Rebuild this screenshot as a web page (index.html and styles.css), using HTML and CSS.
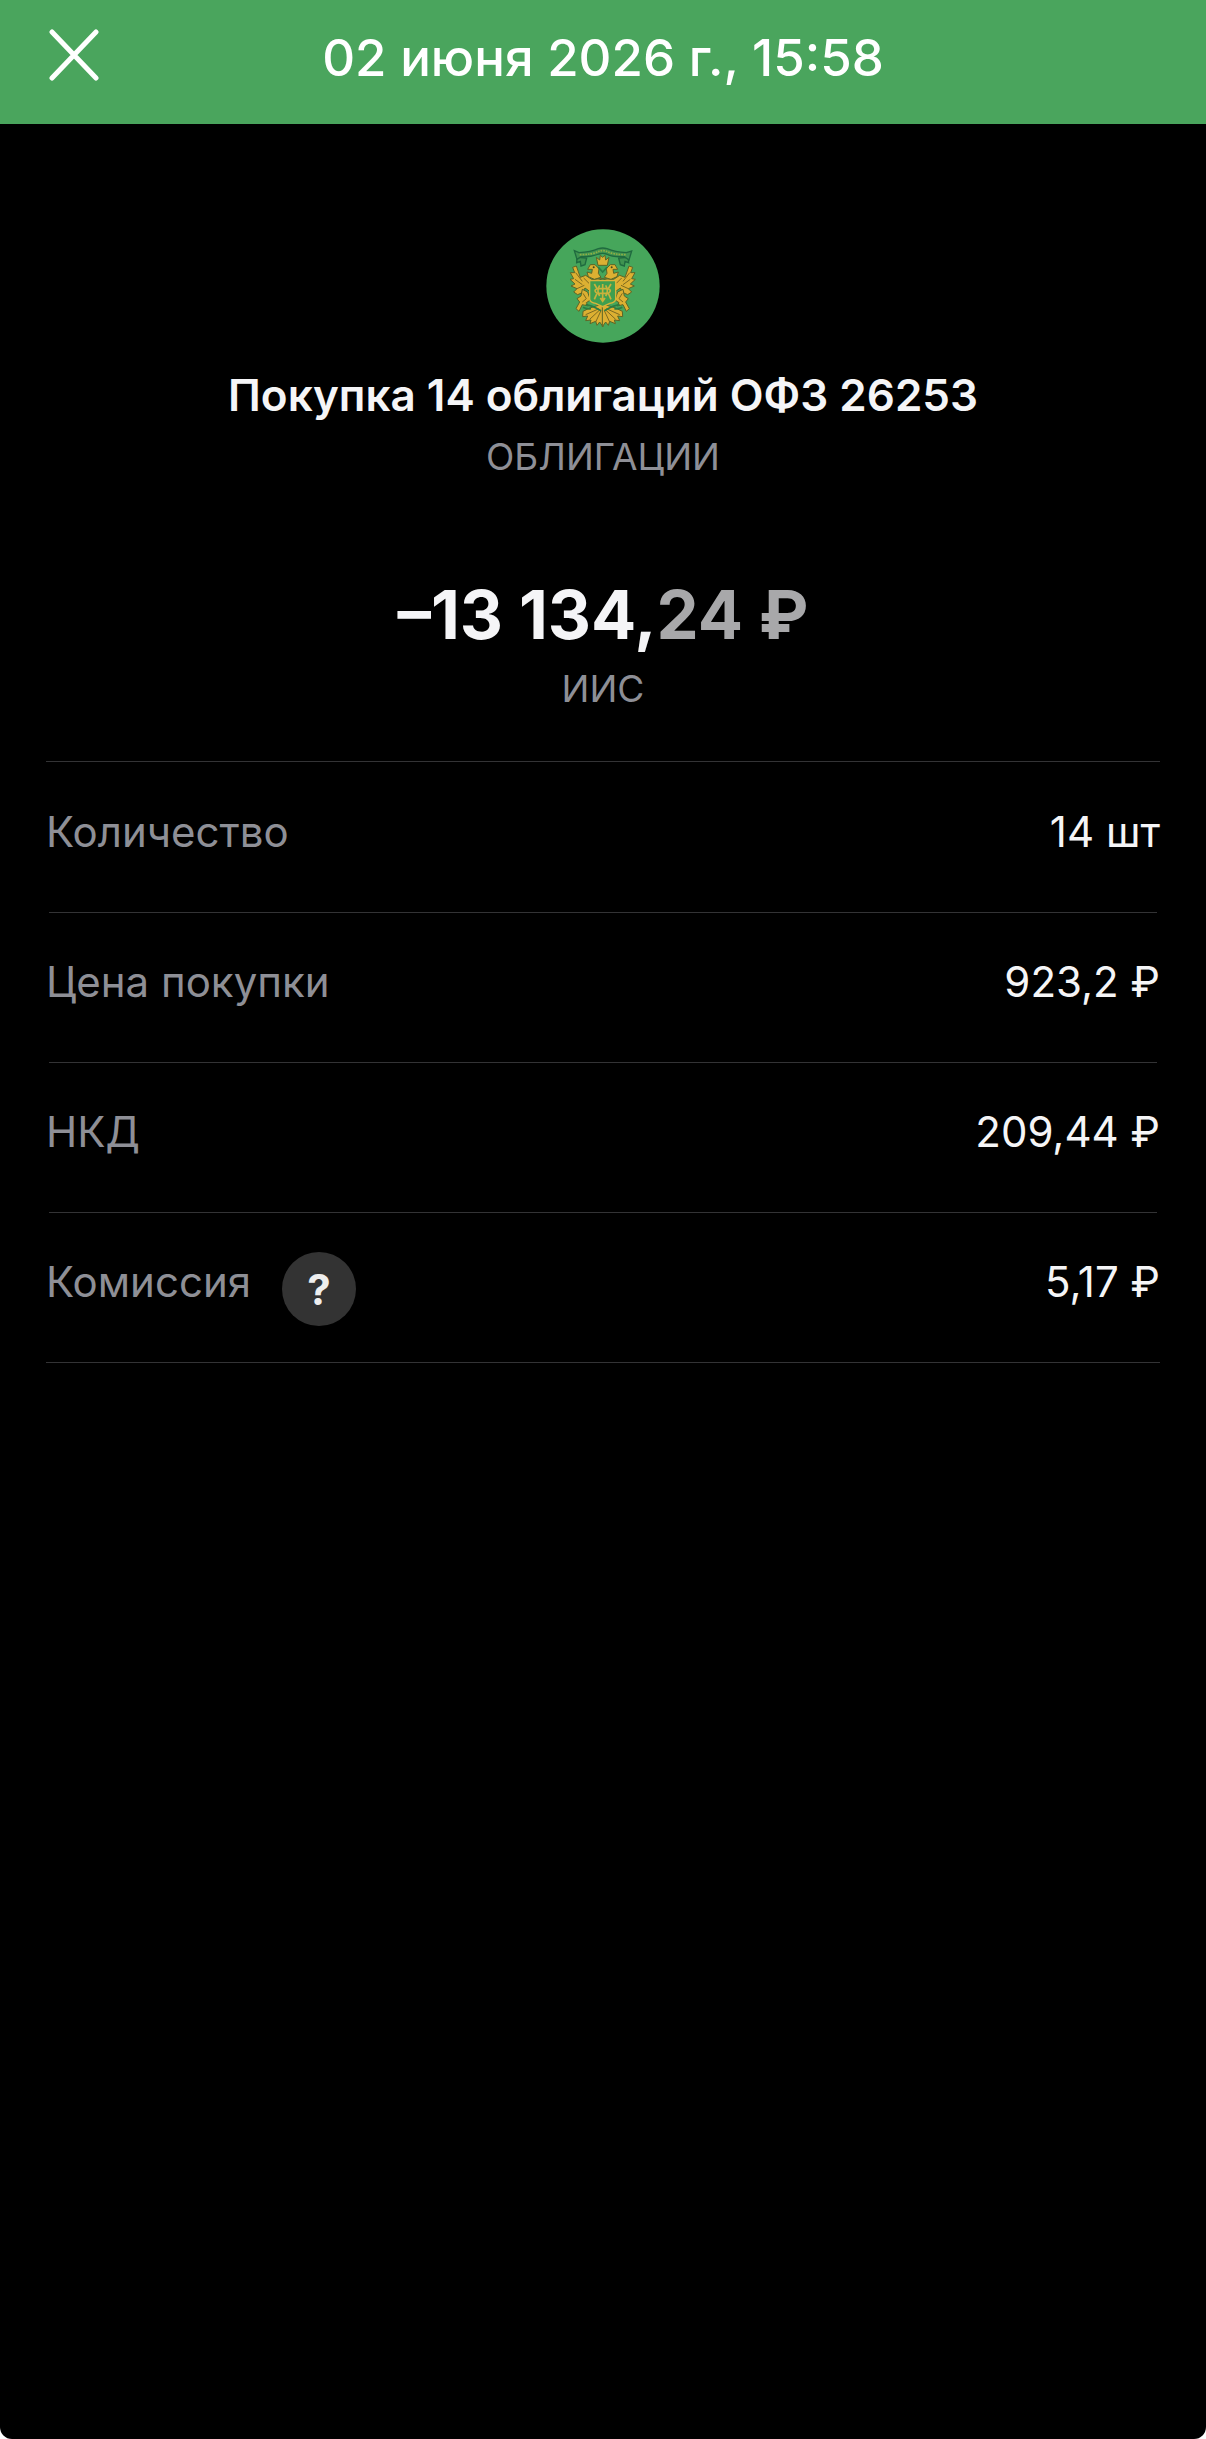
FILE: index.html
```html
<!DOCTYPE html>
<html lang="ru">
<head>
    <meta charset="UTF-8">
    <meta name="viewport" content="width=device-width, initial-scale=1.0">
    <title>Покупка 14 облигаций ОФЗ 26253</title>
    <link rel="stylesheet" href="styles.css">
</head>
<body>
    <div class="screen">
        <header class="topbar">
            <button type="button" class="close" aria-label="Закрыть">
                <svg viewBox="0 0 50 52" aria-hidden="true">
                    <path d="M3 3 L47 49 M47 3 L3 49"/>
                </svg>
            </button>
            <h1>02 июня 2026 г., 15:58</h1>
        </header>

        <main>
            <section class="summary">
                <svg class="emblem" viewBox="42 27 340 342" aria-hidden="true">
                    <defs>
                        <g id="half">
                            <!-- wing -->
                            <path class="gold" d="M211 176 L178 178 L160 166 L144 172 L132 138 L121 142 L127 158 L114 158 L124 176 L113 178 L128 192 L116 198 L134 206 L124 216 L136 224 L150 218 L158 204 L172 214 L176 190 Z"/>
                            <path class="line" d="M130 158 L150 184 M128 178 L150 194 M134 206 L156 196 M154 174 L170 190"/>
                            <!-- head -->
                            <path class="gold" d="M206 172 L198 160 L200 146 L188 134 L174 134 L166 148 L180 148 L178 160 L164 156 L168 170 L186 178 Z"/>
                            <circle class="dark" cx="184" cy="142" r="3"/>
                            <!-- leg -->
                            <path class="gold" d="M150 208 L166 216 L174 240 L162 248 L168 258 L150 254 L140 274 L131 266 L142 246 L134 236 L146 228 Z"/>
                            <path class="line" d="M152 220 L162 236 L150 246"/>
                            <!-- tail -->
                            <path class="gold" d="M212 256 L198 256 L172 264 L152 274 L151 290 L166 288 L160 302 L176 300 L173 311 L190 304 L194 316 L202 306 L212 320 Z"/>
                            <path class="line" d="M200 266 L160 284 M202 270 L172 298 M206 272 L190 306"/>
                            <!-- laurel -->
                            <path class="leaf" d="M160 254 Q178 256 206 272 M152 262 Q162 268 176 266"/>
                            <!-- ribbon tail -->
                            <path class="ribbon" d="M134 112 L133 128 L144 124 L146 138 L158 134 L163 114 Z"/>
                        </g>
                    </defs>
                    <circle class="disc" cx="212" cy="198" r="170"/>
                    <use href="#half"/>
                    <use href="#half" transform="translate(422 0) scale(-1 1)"/>
                    <path class="ribbon" d="M126 92 L140 98 Q176 96 198 86 Q211 82 224 86 Q248 96 282 98 L298 93 L290 120 L276 110 Q240 112 222 102 Q211 98 200 102 Q176 112 146 110 L134 118 Z"/>
                    <path class="motto" d="M142 104 Q180 104 200 94 Q211 90 222 94 Q244 104 280 104"/>
                    <!-- crown -->
                    <path class="gold" d="M192 112 L202 120 L204 106 L211 112 L218 106 L220 120 L230 112 L225 136 L197 136 Z"/>
                    <path class="leaf" d="M198 142 L211 156 L224 142"/>
                    <!-- shield -->
                    <path class="shield" d="M172 182 L250 182 L250 238 Q248 248 232 250 L211 260 L190 250 Q174 248 172 238 Z"/>
                    <path class="mark" d="M186 192 L194 206 Q182 212 194 220 L186 238 M236 192 L228 206 Q240 212 228 220 L236 238 M211 192 V246 M194 206 H228 M194 220 H228 M202 196 Q192 212 202 228 M220 196 Q230 212 220 228 M204 234 L211 244 L218 234"/>
                </svg>
                <h2>Покупка 14 облигаций ОФЗ 26253</h2>
                <p class="kind">ОБЛИГАЦИИ</p>
                <p class="amount">–13 134,<span class="cents">24 ₽</span></p>
                <p class="account">ИИС</p>
            </section>

            <dl class="details">
                <div class="row">
                    <dt>Количество</dt>
                    <dd>14 шт</dd>
                </div>
                <div class="row">
                    <dt>Цена покупки</dt>
                    <dd>923,2 ₽</dd>
                </div>
                <div class="row">
                    <dt>НКД</dt>
                    <dd>209,44 ₽</dd>
                </div>
                <div class="row">
                    <dt>Комиссия <button type="button" class="help" aria-label="Подробнее о комиссии">?</button></dt>
                    <dd>5,17 ₽</dd>
                </div>
            </dl>
        </main>
    </div>
</body>
</html>
```
FILE: styles.css
```css
* {
    box-sizing: border-box;
}

body {
    margin: 0;
    background: #fff;
    font-family: Inter, "Noto Sans", sans-serif;
    color: #f5f5f7;
}

h1, h2, p, dl, dd {
    margin: 0;
}

button {
    border: none;
    padding: 0;
    font-family: inherit;
    cursor: pointer;
}

.screen {
    min-height: 100vh;
    background: #000;
    border-radius: 0 0 12px 12px;
    overflow: hidden;
}

.topbar {
    display: grid;
    grid-template-columns: 52px 1fr 52px;
    align-items: end;
    padding: 24px 48px 34px;
    background: #4aa55d;
    color: #fff;
}

.topbar h1 {
    font-size: 51px;
    line-height: 64px;
    font-weight: 500;
    text-align: center;
}

.close {
    height: 66px;
    padding-bottom: 4px;
    background: none;
}

.close svg {
    display: block;
    width: 50px;
    height: 52px;
    margin: 0 auto;
    fill: none;
    stroke: #fff;
    stroke-width: 5;
    stroke-linecap: round;
}

.summary {
    display: flex;
    flex-direction: column;
    align-items: center;
    padding: 105px 46px 48px;
    text-align: center;
}

.emblem {
    width: 114px;
    height: 114px;
    margin-bottom: 24px;
}

.summary h2 {
    font-size: 44px;
    line-height: 56px;
    font-weight: 600;
}

.kind,
.account {
    font-size: 37px;
    line-height: 48px;
    color: #8e8f96;
}

.kind {
    margin-top: 10px;
}

.amount {
    margin-top: 94px;
    font-size: 67px;
    line-height: 80px;
    font-weight: 700;
}

.account {
    margin-top: 10px;
}

.cents {
    color: #a8a8aa;
}

.details {
    margin: 0 46px;
    border-top: 1px solid #333335;
    border-bottom: 1px solid #333335;
}

.row {
    display: flex;
    justify-content: space-between;
    min-height: 150px;
    padding-top: 40px;
    font-size: 42px;
    line-height: 60px;
}

/* inner dividers are a little shorter than the outer ones */
.row + .row {
    background: linear-gradient(#333335, #333335) center top / calc(100% - 6px) 1px no-repeat;
}

.row dt {
    display: flex;
    gap: 31px;
    color: #8e8f96;
}

.help {
    width: 74px;
    height: 74px;
    border-radius: 50%;
    background: #333;
    color: #eee;
    font-size: 42px;
    font-weight: 700;
}

.disc {
    fill: #46a65b;
}

.gold {
    fill: #dcb032;
    stroke: #5d6526;
    stroke-width: 3;
    stroke-linejoin: round;
}

.line {
    fill: none;
    stroke: #7d6a20;
    stroke-width: 3;
}

.dark {
    fill: #3e4a20;
}

.leaf {
    fill: none;
    stroke: #2a7d43;
    stroke-width: 5;
}

.ribbon {
    fill: #3f9350;
    stroke: #1f6a3f;
    stroke-width: 4;
}

.motto {
    fill: none;
    stroke: #8fae45;
    stroke-width: 5;
    stroke-dasharray: 5 3;
}

.shield {
    fill: #3f9f4f;
    stroke: #d9b53a;
    stroke-width: 4;
}

.mark {
    fill: none;
    stroke: #c9b23c;
    stroke-width: 5;
}
```
